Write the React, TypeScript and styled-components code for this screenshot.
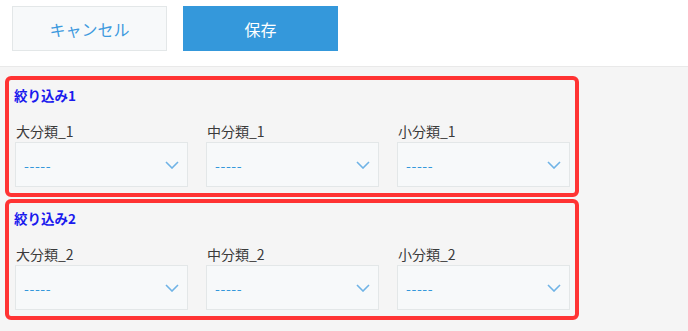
import React from "react";
import styled, { createGlobalStyle } from "styled-components";

const GlobalStyle = createGlobalStyle`
  html, body {
    margin: 0;
    padding: 0;
    background: #f5f5f5;
    font-family: "Noto Sans CJK JP", "Noto Sans", sans-serif;
  }
`;

const Page = styled.div`
  width: 688px;
  min-height: 331px;
  background: #f5f5f5;
`;

const Header = styled.div`
  display: flex;
  gap: 16px;
  padding: 6px 12px 15px;
  background: #ffffff;
  border-bottom: 1px solid #e9e9e9;
`;

const Button = styled.button<{ $primary?: boolean }>`
  width: 155px;
  height: 45px;
  box-sizing: border-box;
  border: 1px solid ${(p) => (p.$primary ? "#3498db" : "#e3e7e8")};
  background: ${(p) => (p.$primary ? "#3498db" : "#f7f9fa")};
  color: ${(p) => (p.$primary ? "#ffffff" : "#3d9ade")};
  font-family: "Noto Sans CJK JP", sans-serif;
  font-size: 16px;
  padding: 0;
  cursor: pointer;
`;

const Content = styled.div`
  display: flex;
  flex-direction: column;
  gap: 2px;
  padding: 9px 0 0 5px;
`;

const FilterBox = styled.section`
  width: 574px;
  box-sizing: border-box;
  border: 4px solid #ff3333;
  border-radius: 6px;
  padding: 6px 5px 6px 6px;
`;

const Title = styled.div`
  color: #1a1aee;
  font-weight: bold;
  font-size: 13.5px;
  line-height: 18px;
  margin-left: -1px;
  margin-bottom: 17px;
`;

const Row = styled.div`
  display: grid;
  grid-template-columns: repeat(3, 173px);
  column-gap: 18px;
`;

const Field = styled.div`
  display: flex;
  flex-direction: column;
  gap: 1px;
`;

const Label = styled.div`
  color: #3a3a3a;
  font-size: 14px;
  line-height: 20px;
  padding-left: 1px;
`;

const Select = styled.div`
  height: 45px;
  box-sizing: border-box;
  background: #f7f9fa;
  border: 1px solid #e3e7e8;
  display: flex;
  align-items: center;
  justify-content: space-between;
  padding: 0 8px;
`;

const Placeholder = styled.span`
  color: #3498db;
  font-size: 14px;
  letter-spacing: 0.6px;
`;

const Chevron = () => (
  <svg width="14" height="8" viewBox="0 0 14 8" fill="none">
    <path d="M1 1 L7 7 L13 1" stroke="#6fb3e6" strokeWidth="1.6" />
  </svg>
);

const filters = [1, 2];
const levels = ["大分類", "中分類", "小分類"];

export default function App() {
  return (
    <Page>
      <GlobalStyle />
      <Header>
        <Button>キャンセル</Button>
        <Button $primary>保存</Button>
      </Header>
      <Content>
        {filters.map((n) => (
          <FilterBox key={n}>
            <Title>絞り込み{n}</Title>
            <Row>
              {levels.map((l) => (
                <Field key={l}>
                  <Label>
                    {l}_{n}
                  </Label>
                  <Select>
                    <Placeholder>-----</Placeholder>
                    <Chevron />
                  </Select>
                </Field>
              ))}
            </Row>
          </FilterBox>
        ))}
      </Content>
    </Page>
  );
}
